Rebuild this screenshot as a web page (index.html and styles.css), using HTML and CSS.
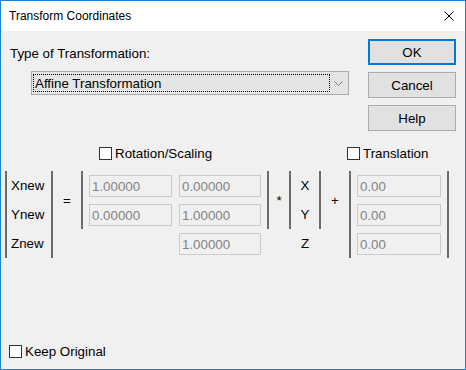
FILE: index.html
```html
<!DOCTYPE html>
<html lang="en">
<head>
  <meta charset="UTF-8">
  <title>Transform Coordinates</title>
  <link rel="stylesheet" href="styles.css">
</head>
<body>

  <div class="window">
    <div class="titlebar">
      <span class="title">Transform Coordinates</span>
      <svg class="close" width="10" height="10" viewBox="0 0 10 10">
        <path d="M0.5 0.5 L9.5 9.5 M9.5 0.5 L0.5 9.5" stroke="#000" stroke-width="1" fill="none"/>
      </svg>
    </div>

    <div class="dialog">
      <div class="top">
        <div class="type">
          <div class="label">Type of Transformation:</div>
          <div class="combo">
            <span class="combo-text">Affine Transformation</span>
            <svg class="chevron" width="9" height="5" viewBox="0 0 9 5">
              <path d="M0.5 0.5 L4.5 4.5 L8.5 0.5" stroke="#7a7a7a" stroke-width="1" fill="none"/>
            </svg>
          </div>
        </div>
        <div class="buttons">
          <button class="btn default">OK</button>
          <button class="btn">Cancel</button>
          <button class="btn">Help</button>
        </div>
      </div>

      <div class="matrix">
        <label class="check head-rot"><span class="box"></span>Rotation/Scaling</label>
        <label class="check head-tr"><span class="box"></span>Translation</label>

        <!-- result vector -->
        <div class="bar full c1"></div>
        <div class="name r1">Xnew</div>
        <div class="name r2">Ynew</div>
        <div class="name r3">Znew</div>
        <div class="bar full c3"></div>

        <div class="op eq">=</div>

        <!-- rotation / scaling -->
        <div class="bar half c5"></div>
        <input class="cell m11" type="text" value="1.00000" disabled>
        <input class="cell m12" type="text" value="0.00000" disabled>
        <input class="cell m21" type="text" value="0.00000" disabled>
        <input class="cell m22" type="text" value="1.00000" disabled>
        <input class="cell m32" type="text" value="1.00000" disabled>
        <div class="bar half c10"></div>

        <div class="op mul">*</div>

        <!-- source vector -->
        <div class="bar half c12"></div>
        <div class="axis r1">X</div>
        <div class="axis r2">Y</div>
        <div class="axis r3">Z</div>
        <div class="bar half c14"></div>

        <div class="op add">+</div>

        <!-- translation -->
        <div class="bar full c16"></div>
        <input class="cell t1" type="text" value="0.00" disabled>
        <input class="cell t2" type="text" value="0.00" disabled>
        <input class="cell t3" type="text" value="0.00" disabled>
        <div class="bar full c18"></div>
      </div>

      <label class="check keep"><span class="box"></span>Keep Original</label>
    </div>
  </div>

</body>
</html>
```

FILE: styles.css
```css
body {
  margin: 0;
  background-color: #ffffff;
  font-family: "Liberation Sans", Arial, sans-serif;
  font-size: 13.33px;
  color: #000000;
}
.window {
  width: 466px;
  height: 370px;
  box-sizing: border-box;
  border: 1px solid #1883d7;
  display: flex;
  flex-direction: column;
}
.titlebar {
  height: 30px;
  background-color: #ffffff;
  display: flex;
  align-items: center;
  padding-left: 8px;
  padding-right: 11px;
}
.title {
  flex: 1;
  font-family: "Liberation Sans", Arial, sans-serif;
  font-size: 12px;
}
.dialog {
  flex: 1;
  background-color: #f0f0f0;
  display: flex;
  flex-direction: column;
  padding-top: 8px;
  padding-bottom: 11px;
}
.top {
  display: flex;
}
.type {
  flex: 1;
  padding-left: 9px;
}
.label {
  margin-top: 7px;
  line-height: 15px;
}
.combo {
  margin-top: 10px;
  margin-left: 21px;
  width: 318px;
  height: 24px;
  box-sizing: border-box;
  border: 1px solid #acacac;
  background-color: #e5e5e5;
  padding: 1px;
  display: flex;
  align-items: center;
}
.combo-text {
  flex: 1;
  height: 18px;
  line-height: 17px;
  box-sizing: border-box;
  border: 1px dotted #000000;
  padding-left: 1px;
  margin-right: 4px;
}
.chevron {
  margin-right: 4px;
}
.buttons {
  width: 88px;
  margin-right: 9px;
  display: flex;
  flex-direction: column;
  gap: 7px;
}
.btn {
  height: 26px;
  background-color: #e1e1e1;
  border: 1px solid #adadad;
  font-family: "Liberation Sans", Arial, sans-serif;
  font-size: 13.33px;
  color: #000000;
  padding: 0;
}
.btn.default {
  border: 2px solid #0078d7;
}

/* matrix equation */
.matrix {
  margin-top: 16px;
  margin-left: 4px;
  display: grid;
  grid-template-columns: 2px 44px 2px 28px 2px 89px 7px 82px 6px 2px 20px 2px 28px 2px 28px 2px 96px 2px;
  grid-template-rows: 24px 29px 29px 29px;
}
.check {
  display: flex;
  align-items: center;
  height: 13px;
  line-height: 15px;
}
.box {
  width: 13px;
  height: 13px;
  box-sizing: border-box;
  border: 1px solid #333333;
  background-color: #ffffff;
  margin-right: 3px;
}
.head-rot {
  grid-row: 1;
  grid-column: 6 / 10;
  padding-left: 16px;
}
.head-tr {
  grid-row: 1;
  grid-column: 15 / 19;
  padding-left: 26px;
}
.bar {
  background-color: #6b6b6b;
}
.bar.full {
  grid-row: 2 / 5;
}
.bar.half {
  grid-row: 2 / 4;
}
.c1 { grid-column: 1; }
.c3 { grid-column: 3; }
.c5 { grid-column: 5; }
.c10 { grid-column: 10; }
.c12 { grid-column: 12; }
.c14 { grid-column: 14; }
.c16 { grid-column: 16; }
.c18 { grid-column: 18; }
.r1 { grid-row: 2; }
.r2 { grid-row: 3; }
.r3 { grid-row: 4; }
.name {
  grid-column: 2;
  padding-left: 4px;
  display: flex;
  align-items: center;
}
.axis {
  grid-column: 13;
  display: flex;
  align-items: center;
  justify-content: center;
}
.op {
  grid-row: 2 / 4;
  display: flex;
  align-items: center;
  justify-content: center;
}
.eq { grid-column: 4; }
.mul { grid-column: 11; }
.add { grid-column: 15; }
.cell {
  align-self: start;
  margin-top: 4px;
  height: 22px;
  box-sizing: border-box;
  border: 1px solid #cccccc;
  background-color: #f0f0f0;
  color: #838383;
  font-family: "Liberation Sans", Arial, sans-serif;
  font-size: 13.33px;
  padding: 0 2px;
  min-width: 0;
}
.m11 { grid-row: 2; grid-column: 6; margin-left: 6px; }
.m21 { grid-row: 3; grid-column: 6; margin-left: 6px; }
.m12 { grid-row: 2; grid-column: 8; }
.m22 { grid-row: 3; grid-column: 8; }
.m32 { grid-row: 4; grid-column: 8; }
.t1, .t2, .t3 {
  grid-column: 17;
  margin-left: 6px;
  margin-right: 6px;
}
.t1 { grid-row: 2; }
.t2 { grid-row: 3; }
.t3 { grid-row: 4; }
.keep {
  margin-top: auto;
  margin-left: 8px;
}
```
